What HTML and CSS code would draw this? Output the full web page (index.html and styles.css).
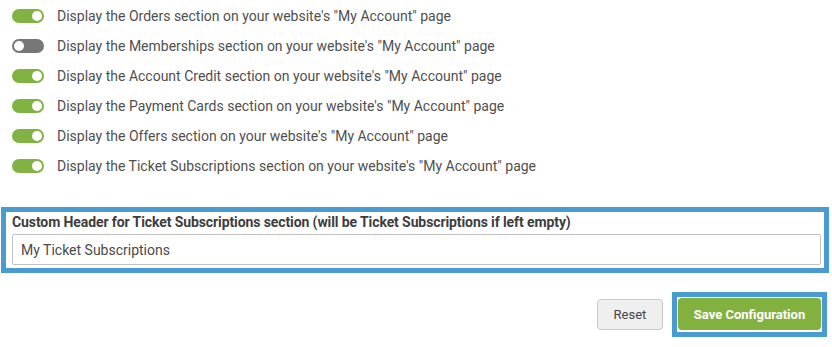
FILE: index.html
```html
<!DOCTYPE html>
<html>
<head>
<meta charset="utf-8">
<title>My Account settings</title>
<link rel="stylesheet" href="styles.css">
</head>
<body>
<div class="settings">
  <div class="toggles">
    <div class="toggle-row"><span class="switch on"></span><span class="toggle-text">Display the Orders section on your website's "My Account" page</span></div>
    <div class="toggle-row"><span class="switch"></span><span class="toggle-text">Display the Memberships section on your website's "My Account" page</span></div>
    <div class="toggle-row"><span class="switch on"></span><span class="toggle-text">Display the Account Credit section on your website's "My Account" page</span></div>
    <div class="toggle-row"><span class="switch on"></span><span class="toggle-text">Display the Payment Cards section on your website's "My Account" page</span></div>
    <div class="toggle-row"><span class="switch on"></span><span class="toggle-text">Display the Offers section on your website's "My Account" page</span></div>
    <div class="toggle-row"><span class="switch on"></span><span class="toggle-text">Display the Ticket Subscriptions section on your website's "My Account" page</span></div>
  </div>

  <div class="highlight field-box">
    <label class="field-label" for="ticketHeader">Custom Header for Ticket Subscriptions section (will be Ticket Subscriptions if left empty)</label>
    <input class="field-input" id="ticketHeader" type="text" value="My Ticket Subscriptions">
  </div>

  <div class="actions">
    <button class="btn btn-reset" type="button">Reset</button>
    <div class="highlight save-box">
      <button class="btn btn-save" type="button">Save Configuration</button>
    </div>
  </div>
</div>
</body>
</html>
```

FILE: styles.css
```css
*,
*::before,
*::after {
  box-sizing: border-box;
}

body {
  margin: 0;
  background: #fff;
  font-family: Roboto, "Liberation Sans", Arial, sans-serif;
  color: #4f4f4f;
}

.settings {
  padding: 1px 3px 0 1px;
}

.toggles {
  display: flex;
  flex-direction: column;
  padding: 0 0 0 11px;
}

.toggle-row {
  display: flex;
  align-items: center;
  height: 30px;
}

.switch {
  position: relative;
  width: 32px;
  height: 14px;
  border-radius: 7px;
  background: #777;
  flex-shrink: 0;
}

.switch::after {
  content: '';
  position: absolute;
  top: 2px;
  left: 2px;
  width: 10px;
  height: 10px;
  border-radius: 50%;
  background: #fff;
}

.switch.on {
  background: #80b341;
}

.switch.on::after {
  left: auto;
  right: 2px;
}

.toggle-text {
  margin-left: 13px;
  font-size: 14px;
}

.highlight {
  border: 5px solid #4a9bd0;
  background: #fff;
}

.field-box {
  margin-top: 26px;
  padding: 0 3px 3px 6px;
  display: flex;
  flex-direction: column;
}

.field-label {
  font-size: 14px;
  font-weight: bold;
  letter-spacing: -0.1px;
  color: #3d3d3d;
  line-height: 18px;
  padding-top: 1px;
  margin-bottom: 3px;
}

.field-input {
  height: 31px;
  border: 1px solid #c2c2c2;
  border-radius: 2px;
  padding: 0 8px;
  font-family: inherit;
  font-size: 14px;
  color: #4a4a4a;
}

.actions {
  display: flex;
  justify-content: flex-end;
  align-items: center;
  margin-top: 19px;
  padding-right: 2px;
}

.btn {
  font-family: inherit;
  font-size: 13px;
  border-radius: 4px;
  cursor: pointer;
}

.btn-reset {
  width: 66px;
  height: 31px;
  background: #efefef;
  border: 1px solid #c8c8c8;
  color: #444;
  margin-right: 9px;
}

.save-box {
  padding: 1px 1px 2px;
}

.btn-save {
  display: block;
  width: 143px;
  height: 32px;
  background: #83b140;
  border: none;
  color: #fff;
  font-weight: bold;
}
```
